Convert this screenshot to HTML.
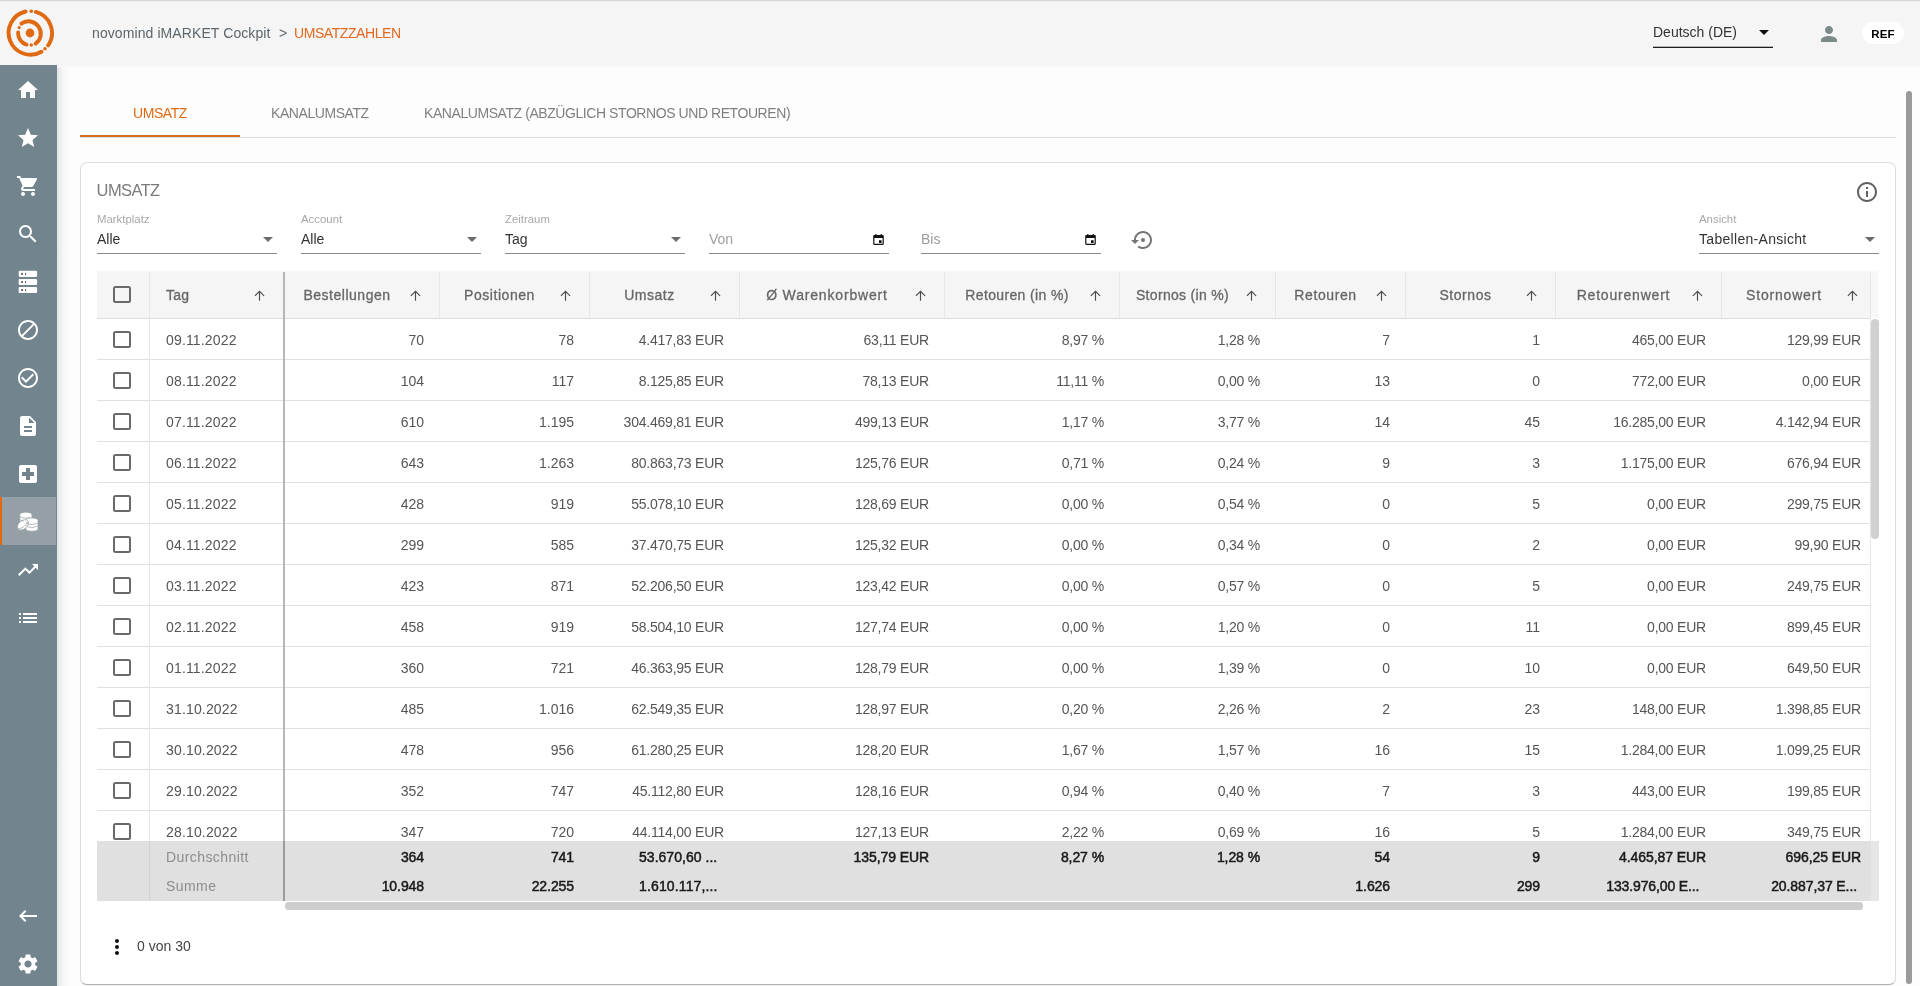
<!DOCTYPE html>
<html lang="de">
<head>
<meta charset="utf-8">
<title>novomind iMARKET Cockpit - UMSATZZAHLEN</title>
<style>
*{box-sizing:border-box;margin:0;padding:0}
html,body{width:1920px;height:986px;overflow:hidden}
body{font-family:"Liberation Sans",sans-serif;font-size:14px;color:#4a4a4a;background:#fdfdfd;position:relative}
#root{position:absolute;left:0;top:0;width:1920px;height:986px;overflow:hidden;transform:translateZ(0);will-change:transform}
.abs{position:absolute}
/* top bar */
#top{position:absolute;left:0;top:0;width:1920px;height:65px;background:#f5f5f5}
#topline{position:absolute;left:0;top:0;width:1920px;height:3px;background:linear-gradient(#d6d6d6,#d6d6d6 1px,#efefef 1px,#f5f5f5 3px)}
#crumb{position:absolute;left:92px;top:24px;height:18px;line-height:18px;font-size:14px;color:#5c666c;white-space:nowrap;letter-spacing:.09px}
#crumb b{position:absolute;left:187px;top:0;font-weight:normal;letter-spacing:0}
#crumb .o{position:absolute;left:202px;top:0;letter-spacing:-.42px}
#crumb .o{color:#e2691f}
#lang{position:absolute;left:1653px;top:23px;line-height:18px;font-size:14px;color:#333;white-space:nowrap}
#langline{position:absolute;left:1653px;top:46px;width:120px;height:2px;background:linear-gradient(#b5b5b5,#b5b5b5 45%,#1e1e1e 55%)}
.tri{position:absolute;width:0;height:0;border-left:5px solid transparent;border-right:5px solid transparent;border-top:5px solid #6c6c6c}
#ref{position:absolute;left:1862px;top:22px;width:42px;height:22px;border-radius:11px;background:#fff;color:#000;font-weight:bold;font-size:11.5px;line-height:24px;text-align:center;letter-spacing:.25px}
/* sidebar */
#side{position:absolute;left:0;top:65px;width:57px;height:921px;background:#72848e}
#sideshadow{position:absolute;left:57px;top:65px;width:16px;height:921px;background:linear-gradient(to right,rgba(40,70,80,.15),rgba(40,70,80,.07) 22%,rgba(40,70,80,.025) 50%,rgba(0,0,0,0))}
#topshadow{position:absolute;left:57px;top:65px;width:1863px;height:4px;background:linear-gradient(#f5f5f5,rgba(250,250,250,.5) 60%,rgba(253,253,253,0))}
#side svg{position:absolute;left:16px;width:24px;height:24px;fill:#fff}
#active{position:absolute;left:0;top:431.700px;width:56px;height:48.300px;background:#94a0a6;border-left:2.500px solid #df6a12}
/* main */
#tabs{position:absolute;left:57px;top:65px;width:1863px;height:73px;background:#fdfdfd}
#tabline{position:absolute;left:80px;top:137px;width:1816px;height:1px;background:#dcdcdc}
#tabind{position:absolute;left:80px;top:135px;width:160px;height:2px;background:#d8701e}
.tab{position:absolute;top:104px;line-height:18px;font-size:14px;color:#808080;white-space:nowrap;letter-spacing:-.43px}
#card{position:absolute;left:80px;top:162px;width:1816px;height:823px;background:#fff;border:1px solid #dcdcdc;border-bottom-color:#b2b2b2;border-radius:7px;box-shadow:0 1px 1px rgba(0,0,0,.06)}
#ctitle{position:absolute;left:96.6px;top:180px;font-size:16.5px;line-height:20px;color:#7a7a7a;letter-spacing:-.6px}
.flab{position:absolute;top:212px;font-size:11.4px;line-height:14px;color:#a8a8a8;white-space:nowrap}
.fval{position:absolute;top:230px;font-size:14px;line-height:18px;color:#333;white-space:nowrap}
.fval.ph{color:#9e9e9e}
.fline{position:absolute;top:253px;height:1px;width:180px;background:#8a8a8a}
/* table */
#tbl{position:absolute;left:97px;top:270px;width:1774px;height:631px;overflow:hidden}
#hext{position:absolute;left:1871px;top:271px;width:7px;height:47px;background:#f8f8f8}
#fext{position:absolute;left:1871px;top:841px;width:8px;height:60px;background:#e6e6e6}
#thead{position:absolute;left:0;top:0;width:1782px;height:48px;background:linear-gradient(#fcfcfc,#f5f5f5 3px)}
.hc{position:absolute;top:0;height:48px}
.hc span{position:absolute;top:16px;line-height:18px;font-size:14px;color:#666;-webkit-text-stroke:.3px #666;white-space:nowrap}
.hc .hm{width:200px;text-align:center}
.sa{position:absolute;right:18px;top:20px;width:11px;height:11px}
.tr{position:absolute;left:0;width:1782px;height:41px;border-bottom:1px solid #e0e0e0}
.tr span{position:absolute;top:12px;line-height:18px;font-size:14px;color:#555;white-space:nowrap}
.cb{position:absolute;width:18px;height:17px;border:2px solid #6a6a6a;border-radius:2.5px;background:#fff}
#hline{position:absolute;left:0;top:48px;width:1782px;height:1px;background:#dcdcdc}
.vs{position:absolute;top:2px;width:1px;height:629px;background:#e6e6e6}
#thick{position:absolute;left:186px;top:2px;width:2px;height:629px;background:linear-gradient(#b6b6b6,#b6b6b6 569px,#9c9c9c 569px)}
#tfoot{position:absolute;left:0;top:571px;width:1782px;height:60px;background:#e0e0e0}
.ftr{position:absolute;left:0;width:1782px;height:29px}
.ftr span{position:absolute;top:5px;line-height:18px;font-size:14px;white-space:nowrap}
.ftr .fl{color:#8c8c8c;letter-spacing:.42px}
.ftr .fr{color:#1a1a1a;-webkit-text-stroke:.5px #1a1a1a;letter-spacing:-.08px}
#vscroll{position:absolute;left:1871px;top:319px;width:8px;height:220px;border-radius:5px;background:#d0d0d0}
#hscroll{position:absolute;left:285px;top:902px;width:1578px;height:8px;border-radius:3.500px;background:#cdcdcd}
#pscroll{position:absolute;left:1906px;top:91px;width:6px;height:892.500px;border-radius:3px;background:#9a9a9a}
#count{position:absolute;left:137px;top:937px;line-height:18px;font-size:14px;color:#444}
</style>
</head>
<body>
<div id="root">
<div id="top"></div>
<div id="topline"></div>

<!-- logo -->
<svg class="abs" style="left:4.200px;top:7.300px" width="52" height="52" viewBox="0 0 52 52">
 <g fill="none" stroke="#df6a12" stroke-width="3.9" stroke-linecap="round">
  <path d="M31.9 4.9A21.9 21.9 0 0 1 44.2 38.3"/>
  <path d="M37.5 44.8A21.9 21.9 0 1 1 21.6 4.5"/>
  <path d="M17.4 16.6A12 12 0 1 1 31.6 36.7"/>
  <path d="M22.6 37.6A12 12 0 0 1 14.1 25.5"/>
 </g>
 <g fill="#df6a12">
  <circle cx="26" cy="26" r="4.4"/>
  <circle cx="27.3" cy="4.3" r="1.8"/>
  <circle cx="41" cy="41.8" r="1.8"/>
  <circle cx="15.2" cy="20.6" r="1.6"/>
  <circle cx="27.3" cy="38" r="1.7"/>
 </g>
</svg>

<div id="crumb">novomind iMARKET Cockpit<b>&gt;</b><span class="o">UMSATZZAHLEN</span></div>
<div id="lang">Deutsch (DE)</div>
<div id="langline"></div>
<div class="tri" style="left:1759px;top:30px;border-top-color:#111"></div>
<svg class="abs" style="left:1817px;top:22px" width="24" height="24" viewBox="0 0 24 24"><path fill="#7d8a8a" d="M12 12c2.21 0 4-1.79 4-4s-1.79-4-4-4-4 1.79-4 4 1.79 4 4 4zm0 2c-2.67 0-8 1.34-8 4v2h16v-2c0-2.66-5.33-4-8-4z"/></svg>
<div id="ref">REF</div>

<!-- main -->
<div id="tabs"></div>
<div id="tabline"></div>
<div id="tabind"></div>
<div class="tab" style="left:133px;color:#df6a12">UMSATZ</div>
<div class="tab" style="left:271px">KANALUMSATZ</div>
<div class="tab" style="left:424px">KANALUMSATZ (ABZÜGLICH STORNOS UND RETOUREN)</div>

<div id="card"></div>
<div id="ctitle">UMSATZ</div>
<svg class="abs" style="left:1855px;top:180px" width="24" height="24" viewBox="0 0 24 24"><path fill="#616161" d="M11 17h2v-6h-2v6zm1-15C6.48 2 2 6.48 2 12s4.48 10 10 10 10-4.48 10-10S17.52 2 12 2zm0 18c-4.42 0-8-3.58-8-8s3.58-8 8-8 8 3.58 8 8-3.58 8-8 8zM11 9h2V7h-2v2z"/></svg>

<div class="flab" style="left:97px">Marktplatz</div>
<div class="fval" style="left:97px">Alle</div>
<div class="fline" style="left:97px"></div>
<div class="tri" style="left:263px;top:237px"></div>

<div class="flab" style="left:301px">Account</div>
<div class="fval" style="left:301px">Alle</div>
<div class="fline" style="left:301px"></div>
<div class="tri" style="left:467px;top:237px"></div>

<div class="flab" style="left:505px">Zeitraum</div>
<div class="fval" style="left:505px">Tag</div>
<div class="fline" style="left:505px"></div>
<div class="tri" style="left:671px;top:237px"></div>

<div class="fval ph" style="left:709px">Von</div>
<div class="fline" style="left:709px"></div>
<svg class="abs cal" style="left:873px;top:234px" width="11" height="11" viewBox="0 0 11 11"><path fill="#111" d="M2.2 0h1.2v1h4.2V0h1.2v1H9.6c.7 0 1.2.5 1.2 1.2v7.6c0 .7-.5 1.2-1.2 1.2H1.4C.7 11 .2 10.500 .2 9.800V2.200C.2 1.500 .7 1 1.400 1h.8zM1.400 3.900v5.900h8.200V3.900zM6 6.300h2.600v2.600H6z"/></svg>

<div class="fval ph" style="left:921px">Bis</div>
<div class="fline" style="left:921px"></div>
<svg class="abs cal" style="left:1085px;top:234px" width="11" height="11" viewBox="0 0 11 11"><path fill="#111" d="M2.2 0h1.2v1h4.2V0h1.2v1H9.6c.7 0 1.2.5 1.2 1.2v7.6c0 .7-.5 1.2-1.2 1.2H1.4C.7 11 .2 10.500 .2 9.800V2.200C.2 1.500 .7 1 1.400 1h.8zM1.400 3.900v5.900h8.200V3.900zM6 6.300h2.600v2.600H6z"/></svg>

<svg class="abs" style="left:1131px;top:228px" width="24" height="24" viewBox="0 0 24 24"><path fill="#757575" d="M14 12c0-1.1-.9-2-2-2s-2 .9-2 2 .9 2 2 2 2-.9 2-2zm-2-9c-4.97 0-9 4.03-9 9H0l4 4 4-4H5c0-3.87 3.13-7 7-7s7 3.13 7 7-3.13 7-7 7c-1.51 0-2.91-.49-4.06-1.3l-1.42 1.44C8.040 20.300 9.940 21 12 21c4.970 0 9-4.030 9-9s-4.030-9-9-9z"/></svg>

<div class="flab" style="left:1699px">Ansicht</div>
<div class="fval" style="left:1699px;letter-spacing:.3px">Tabellen-Ansicht</div>
<div class="fline" style="left:1699px"></div>
<div class="tri" style="left:1865px;top:237px"></div>

<!-- table -->
<div id="tbl">
 <div id="thead"></div>
 <i class="cb" style="left:16px;top:16px;background:transparent"></i>
<div class="hc" style="left:52px;width:135px"><span style="left:17px;letter-spacing:0.24px">Tag</span><svg class="sa" style="right:19px" viewBox="0 0 11 11"><path d="M5.5 10.7V1.4M0.9 5.9L5.5 1.3l4.600 4.600" fill="none" stroke="#4d4d4d" stroke-width="1.15"/></svg></div>
<div class="hc" style="left:187px;width:155px"><span class="hm" style="left:-37.0px;letter-spacing:0.52px">Bestellungen</span><svg class="sa" viewBox="0 0 11 11"><path d="M5.5 10.7V1.4M0.9 5.9L5.5 1.3l4.600 4.600" fill="none" stroke="#4d4d4d" stroke-width="1.15"/></svg></div>
<div class="hc" style="left:342px;width:150px"><span class="hm" style="left:-39.5px;letter-spacing:0.54px">Positionen</span><svg class="sa" viewBox="0 0 11 11"><path d="M5.5 10.7V1.4M0.9 5.9L5.5 1.3l4.600 4.600" fill="none" stroke="#4d4d4d" stroke-width="1.15"/></svg></div>
<div class="hc" style="left:492px;width:150px"><span class="hm" style="left:-39.5px;letter-spacing:0.51px">Umsatz</span><svg class="sa" viewBox="0 0 11 11"><path d="M5.5 10.7V1.4M0.9 5.9L5.5 1.3l4.600 4.600" fill="none" stroke="#4d4d4d" stroke-width="1.15"/></svg></div>
<div class="hc" style="left:642px;width:205px"><span class="hm" style="left:-12.0px;letter-spacing:0.83px">Ø Warenkorbwert</span><svg class="sa" viewBox="0 0 11 11"><path d="M5.5 10.7V1.4M0.9 5.9L5.5 1.3l4.600 4.600" fill="none" stroke="#4d4d4d" stroke-width="1.15"/></svg></div>
<div class="hc" style="left:847px;width:175px"><span class="hm" style="left:-27.0px;letter-spacing:0.36px">Retouren (in %)</span><svg class="sa" viewBox="0 0 11 11"><path d="M5.5 10.7V1.4M0.9 5.9L5.5 1.3l4.600 4.600" fill="none" stroke="#4d4d4d" stroke-width="1.15"/></svg></div>
<div class="hc" style="left:1022px;width:156px"><span class="hm" style="left:-36.5px;letter-spacing:0.31px">Stornos (in %)</span><svg class="sa" viewBox="0 0 11 11"><path d="M5.5 10.7V1.4M0.9 5.9L5.5 1.3l4.600 4.600" fill="none" stroke="#4d4d4d" stroke-width="1.15"/></svg></div>
<div class="hc" style="left:1178px;width:130px"><span class="hm" style="left:-49.5px;letter-spacing:0.59px">Retouren</span><svg class="sa" viewBox="0 0 11 11"><path d="M5.5 10.7V1.4M0.9 5.9L5.5 1.3l4.600 4.600" fill="none" stroke="#4d4d4d" stroke-width="1.15"/></svg></div>
<div class="hc" style="left:1308px;width:150px"><span class="hm" style="left:-39.5px;letter-spacing:0.54px">Stornos</span><svg class="sa" viewBox="0 0 11 11"><path d="M5.5 10.7V1.4M0.9 5.9L5.5 1.3l4.600 4.600" fill="none" stroke="#4d4d4d" stroke-width="1.15"/></svg></div>
<div class="hc" style="left:1458px;width:166px"><span class="hm" style="left:-31.5px;letter-spacing:0.80px">Retourenwert</span><svg class="sa" viewBox="0 0 11 11"><path d="M5.5 10.7V1.4M0.9 5.9L5.5 1.3l4.600 4.600" fill="none" stroke="#4d4d4d" stroke-width="1.15"/></svg></div>
<div class="hc" style="left:1624px;width:155px"><span class="hm" style="left:-37.0px;letter-spacing:0.81px">Stornowert</span><svg class="sa" viewBox="0 0 11 11"><path d="M5.5 10.7V1.4M0.9 5.9L5.5 1.3l4.600 4.600" fill="none" stroke="#4d4d4d" stroke-width="1.15"/></svg></div>
 <div id="hline"></div>
<div class="tr" style="top:49px"><i class="cb" style="left:16px;top:12px"></i><span class="dl" style="left:69px;letter-spacing:.16px">09.11.2022</span><span class="dr" style="right:1455px">70</span><span class="dr" style="right:1305px">78</span><span class="dr" style="right:1155px;letter-spacing:-.22px">4.417,83 EUR</span><span class="dr" style="right:950px;letter-spacing:-.22px">63,11 EUR</span><span class="dr" style="right:775px;letter-spacing:-.22px">8,97 %</span><span class="dr" style="right:619px;letter-spacing:-.22px">1,28 %</span><span class="dr" style="right:489px">7</span><span class="dr" style="right:339px">1</span><span class="dr" style="right:173px;letter-spacing:-.22px">465,00 EUR</span><span class="dr" style="right:18px;letter-spacing:-.22px">129,99 EUR</span></div>
<div class="tr" style="top:90px"><i class="cb" style="left:16px;top:12px"></i><span class="dl" style="left:69px;letter-spacing:.16px">08.11.2022</span><span class="dr" style="right:1455px">104</span><span class="dr" style="right:1305px">117</span><span class="dr" style="right:1155px;letter-spacing:-.22px">8.125,85 EUR</span><span class="dr" style="right:950px;letter-spacing:-.22px">78,13 EUR</span><span class="dr" style="right:775px;letter-spacing:-.22px">11,11 %</span><span class="dr" style="right:619px;letter-spacing:-.22px">0,00 %</span><span class="dr" style="right:489px">13</span><span class="dr" style="right:339px">0</span><span class="dr" style="right:173px;letter-spacing:-.22px">772,00 EUR</span><span class="dr" style="right:18px;letter-spacing:-.22px">0,00 EUR</span></div>
<div class="tr" style="top:131px"><i class="cb" style="left:16px;top:12px"></i><span class="dl" style="left:69px;letter-spacing:.16px">07.11.2022</span><span class="dr" style="right:1455px">610</span><span class="dr" style="right:1305px">1.195</span><span class="dr" style="right:1155px;letter-spacing:-.22px">304.469,81 EUR</span><span class="dr" style="right:950px;letter-spacing:-.22px">499,13 EUR</span><span class="dr" style="right:775px;letter-spacing:-.22px">1,17 %</span><span class="dr" style="right:619px;letter-spacing:-.22px">3,77 %</span><span class="dr" style="right:489px">14</span><span class="dr" style="right:339px">45</span><span class="dr" style="right:173px;letter-spacing:-.22px">16.285,00 EUR</span><span class="dr" style="right:18px;letter-spacing:-.22px">4.142,94 EUR</span></div>
<div class="tr" style="top:172px"><i class="cb" style="left:16px;top:12px"></i><span class="dl" style="left:69px;letter-spacing:.16px">06.11.2022</span><span class="dr" style="right:1455px">643</span><span class="dr" style="right:1305px">1.263</span><span class="dr" style="right:1155px;letter-spacing:-.22px">80.863,73 EUR</span><span class="dr" style="right:950px;letter-spacing:-.22px">125,76 EUR</span><span class="dr" style="right:775px;letter-spacing:-.22px">0,71 %</span><span class="dr" style="right:619px;letter-spacing:-.22px">0,24 %</span><span class="dr" style="right:489px">9</span><span class="dr" style="right:339px">3</span><span class="dr" style="right:173px;letter-spacing:-.22px">1.175,00 EUR</span><span class="dr" style="right:18px;letter-spacing:-.22px">676,94 EUR</span></div>
<div class="tr" style="top:213px"><i class="cb" style="left:16px;top:12px"></i><span class="dl" style="left:69px;letter-spacing:.16px">05.11.2022</span><span class="dr" style="right:1455px">428</span><span class="dr" style="right:1305px">919</span><span class="dr" style="right:1155px;letter-spacing:-.22px">55.078,10 EUR</span><span class="dr" style="right:950px;letter-spacing:-.22px">128,69 EUR</span><span class="dr" style="right:775px;letter-spacing:-.22px">0,00 %</span><span class="dr" style="right:619px;letter-spacing:-.22px">0,54 %</span><span class="dr" style="right:489px">0</span><span class="dr" style="right:339px">5</span><span class="dr" style="right:173px;letter-spacing:-.22px">0,00 EUR</span><span class="dr" style="right:18px;letter-spacing:-.22px">299,75 EUR</span></div>
<div class="tr" style="top:254px"><i class="cb" style="left:16px;top:12px"></i><span class="dl" style="left:69px;letter-spacing:.16px">04.11.2022</span><span class="dr" style="right:1455px">299</span><span class="dr" style="right:1305px">585</span><span class="dr" style="right:1155px;letter-spacing:-.22px">37.470,75 EUR</span><span class="dr" style="right:950px;letter-spacing:-.22px">125,32 EUR</span><span class="dr" style="right:775px;letter-spacing:-.22px">0,00 %</span><span class="dr" style="right:619px;letter-spacing:-.22px">0,34 %</span><span class="dr" style="right:489px">0</span><span class="dr" style="right:339px">2</span><span class="dr" style="right:173px;letter-spacing:-.22px">0,00 EUR</span><span class="dr" style="right:18px;letter-spacing:-.22px">99,90 EUR</span></div>
<div class="tr" style="top:295px"><i class="cb" style="left:16px;top:12px"></i><span class="dl" style="left:69px;letter-spacing:.16px">03.11.2022</span><span class="dr" style="right:1455px">423</span><span class="dr" style="right:1305px">871</span><span class="dr" style="right:1155px;letter-spacing:-.22px">52.206,50 EUR</span><span class="dr" style="right:950px;letter-spacing:-.22px">123,42 EUR</span><span class="dr" style="right:775px;letter-spacing:-.22px">0,00 %</span><span class="dr" style="right:619px;letter-spacing:-.22px">0,57 %</span><span class="dr" style="right:489px">0</span><span class="dr" style="right:339px">5</span><span class="dr" style="right:173px;letter-spacing:-.22px">0,00 EUR</span><span class="dr" style="right:18px;letter-spacing:-.22px">249,75 EUR</span></div>
<div class="tr" style="top:336px"><i class="cb" style="left:16px;top:12px"></i><span class="dl" style="left:69px;letter-spacing:.16px">02.11.2022</span><span class="dr" style="right:1455px">458</span><span class="dr" style="right:1305px">919</span><span class="dr" style="right:1155px;letter-spacing:-.22px">58.504,10 EUR</span><span class="dr" style="right:950px;letter-spacing:-.22px">127,74 EUR</span><span class="dr" style="right:775px;letter-spacing:-.22px">0,00 %</span><span class="dr" style="right:619px;letter-spacing:-.22px">1,20 %</span><span class="dr" style="right:489px">0</span><span class="dr" style="right:339px">11</span><span class="dr" style="right:173px;letter-spacing:-.22px">0,00 EUR</span><span class="dr" style="right:18px;letter-spacing:-.22px">899,45 EUR</span></div>
<div class="tr" style="top:377px"><i class="cb" style="left:16px;top:12px"></i><span class="dl" style="left:69px;letter-spacing:.16px">01.11.2022</span><span class="dr" style="right:1455px">360</span><span class="dr" style="right:1305px">721</span><span class="dr" style="right:1155px;letter-spacing:-.22px">46.363,95 EUR</span><span class="dr" style="right:950px;letter-spacing:-.22px">128,79 EUR</span><span class="dr" style="right:775px;letter-spacing:-.22px">0,00 %</span><span class="dr" style="right:619px;letter-spacing:-.22px">1,39 %</span><span class="dr" style="right:489px">0</span><span class="dr" style="right:339px">10</span><span class="dr" style="right:173px;letter-spacing:-.22px">0,00 EUR</span><span class="dr" style="right:18px;letter-spacing:-.22px">649,50 EUR</span></div>
<div class="tr" style="top:418px"><i class="cb" style="left:16px;top:12px"></i><span class="dl" style="left:69px;letter-spacing:.16px">31.10.2022</span><span class="dr" style="right:1455px">485</span><span class="dr" style="right:1305px">1.016</span><span class="dr" style="right:1155px;letter-spacing:-.22px">62.549,35 EUR</span><span class="dr" style="right:950px;letter-spacing:-.22px">128,97 EUR</span><span class="dr" style="right:775px;letter-spacing:-.22px">0,20 %</span><span class="dr" style="right:619px;letter-spacing:-.22px">2,26 %</span><span class="dr" style="right:489px">2</span><span class="dr" style="right:339px">23</span><span class="dr" style="right:173px;letter-spacing:-.22px">148,00 EUR</span><span class="dr" style="right:18px;letter-spacing:-.22px">1.398,85 EUR</span></div>
<div class="tr" style="top:459px"><i class="cb" style="left:16px;top:12px"></i><span class="dl" style="left:69px;letter-spacing:.16px">30.10.2022</span><span class="dr" style="right:1455px">478</span><span class="dr" style="right:1305px">956</span><span class="dr" style="right:1155px;letter-spacing:-.22px">61.280,25 EUR</span><span class="dr" style="right:950px;letter-spacing:-.22px">128,20 EUR</span><span class="dr" style="right:775px;letter-spacing:-.22px">1,67 %</span><span class="dr" style="right:619px;letter-spacing:-.22px">1,57 %</span><span class="dr" style="right:489px">16</span><span class="dr" style="right:339px">15</span><span class="dr" style="right:173px;letter-spacing:-.22px">1.284,00 EUR</span><span class="dr" style="right:18px;letter-spacing:-.22px">1.099,25 EUR</span></div>
<div class="tr" style="top:500px"><i class="cb" style="left:16px;top:12px"></i><span class="dl" style="left:69px;letter-spacing:.16px">29.10.2022</span><span class="dr" style="right:1455px">352</span><span class="dr" style="right:1305px">747</span><span class="dr" style="right:1155px;letter-spacing:-.22px">45.112,80 EUR</span><span class="dr" style="right:950px;letter-spacing:-.22px">128,16 EUR</span><span class="dr" style="right:775px;letter-spacing:-.22px">0,94 %</span><span class="dr" style="right:619px;letter-spacing:-.22px">0,40 %</span><span class="dr" style="right:489px">7</span><span class="dr" style="right:339px">3</span><span class="dr" style="right:173px;letter-spacing:-.22px">443,00 EUR</span><span class="dr" style="right:18px;letter-spacing:-.22px">199,85 EUR</span></div>
<div class="tr" style="top:541px"><i class="cb" style="left:16px;top:12px"></i><span class="dl" style="left:69px;letter-spacing:.16px">28.10.2022</span><span class="dr" style="right:1455px">347</span><span class="dr" style="right:1305px">720</span><span class="dr" style="right:1155px;letter-spacing:-.22px">44.114,00 EUR</span><span class="dr" style="right:950px;letter-spacing:-.22px">127,13 EUR</span><span class="dr" style="right:775px;letter-spacing:-.22px">2,22 %</span><span class="dr" style="right:619px;letter-spacing:-.22px">0,69 %</span><span class="dr" style="right:489px">16</span><span class="dr" style="right:339px">5</span><span class="dr" style="right:173px;letter-spacing:-.22px">1.284,00 EUR</span><span class="dr" style="right:18px;letter-spacing:-.22px">349,75 EUR</span></div>
 <div id="tfoot"></div>
<div class="ftr" style="top:573px"><span class="fl" style="left:69px">Durchschnitt</span><span class="fr" style="right:1455px">364</span><span class="fr" style="right:1305px">741</span><span class="fr" style="left:542.0px;letter-spacing:0.03px">53.670,60 ...</span><span class="fr" style="right:950px">135,79 EUR</span><span class="fr" style="right:775px">8,27 %</span><span class="fr" style="right:619px">1,28 %</span><span class="fr" style="right:489px">54</span><span class="fr" style="right:339px">9</span><span class="fr" style="right:173px">4.465,87 EUR</span><span class="fr" style="right:18px">696,25 EUR</span></div>
<div class="ftr" style="top:602px"><span class="fl" style="left:69px">Summe</span><span class="fr" style="right:1455px">10.948</span><span class="fr" style="right:1305px">22.255</span><span class="fr" style="left:542.0px;letter-spacing:0.14px">1.610.117,...</span><span class="fr" style="right:489px">1.626</span><span class="fr" style="right:339px">299</span><span class="fr" style="left:1509.3px;letter-spacing:-0.13px">133.976,00 E...</span><span class="fr" style="left:1674.2px;letter-spacing:-0.10px">20.887,37 E...</span></div>
<div class="vs" style="left:52px;height:569px"></div>
<div class="vs" style="left:52px;top:571px;height:60px;background:#d2d2d2"></div>
<div class="vs" style="left:342px;height:46px"></div>
<div class="vs" style="left:492px;height:46px"></div>
<div class="vs" style="left:642px;height:46px"></div>
<div class="vs" style="left:847px;height:46px"></div>
<div class="vs" style="left:1022px;height:46px"></div>
<div class="vs" style="left:1178px;height:46px"></div>
<div class="vs" style="left:1308px;height:46px"></div>
<div class="vs" style="left:1458px;height:46px"></div>
<div class="vs" style="left:1624px;height:46px"></div>
<div class="vs" style="left:1773px;height:569px"></div>
 <div id="thick"></div>
</div>
<div id="hext"></div><div id="fext"></div>
<div id="vscroll"></div>
<div id="hscroll"></div>

<svg class="abs" style="left:105px;top:935px" width="24" height="24" viewBox="0 0 24 24"><path fill="#111" d="M12 8c1.1 0 2-.9 2-2s-.9-2-2-2-2 .9-2 2 .9 2 2 2zm0 2c-1.1 0-2 .9-2 2s.9 2 2 2 2-.9 2-2-.9-2-2-2zm0 6c-1.1 0-2 .9-2 2s.9 2 2 2 2-.9 2-2-.9-2-2-2z"/></svg>
<div id="count">0 von 30</div>

<div id="pscroll"></div>

<div id="sideshadow"></div><div id="topshadow"></div>
<!-- sidebar -->
<div id="side">
 <div id="active"></div>
 <svg style="top:13px" viewBox="0 0 24 24"><path d="M10 20v-6h4v6h5v-8h3L12 3 2 12h3v8z"/></svg>
 <svg style="top:61px" viewBox="0 0 24 24"><path d="M12 17.27L18.18 21l-1.64-7.03L22 9.24l-7.19-.61L12 2 9.19 8.63 2 9.24l5.46 4.73L5.82 21z"/></svg>
 <svg style="top:109px" viewBox="0 0 24 24"><path d="M7 18c-1.1 0-1.99.9-1.99 2S5.9 22 7 22s2-.9 2-2-.9-2-2-2zM1 2v2h2l3.6 7.59-1.35 2.45c-.16.28-.25.61-.25.96 0 1.1.9 2 2 2h12v-2H7.42c-.14 0-.25-.11-.25-.25l.03-.12.9-1.63h7.45c.75 0 1.41-.41 1.75-1.03l3.58-6.49c.08-.14.12-.31.12-.48 0-.55-.45-1-1-1H5.21l-.94-2H1zm16 16c-1.1 0-1.99.9-1.99 2s.89 2 1.99 2 2-.9 2-2-.9-2-2-2z"/></svg>
 <svg style="top:157px" viewBox="0 0 24 24"><path d="M15.5 14h-.79l-.28-.27C15.41 12.59 16 11.11 16 9.5 16 5.91 13.09 3 9.5 3S3 5.91 3 9.5 5.91 16 9.5 16c1.61 0 3.09-.59 4.23-1.57l.27.28v.79l5 4.99L20.49 19l-4.99-5zm-6 0C7.01 14 5 11.99 5 9.500S7.010 5 9.500 5 14 7.010 14 9.500 11.990 14 9.500 14z"/></svg>
 <svg style="top:205px" viewBox="0 0 24 24"><g><rect x="2.7" y="0.7" width="18.4" height="6.2" rx="1.1"/><rect x="2.7" y="9" width="18.4" height="6.1" rx="1.1"/><rect x="2.7" y="17" width="18.4" height="6.1" rx="1.1"/></g><g fill="#5b666d"><rect x="5.1" y="2.9" width="1.9" height="1.9"/><rect x="9" y="2.800" width="1.1" height="2.100"/><rect x="5.1" y="11.1" width="1.9" height="1.9"/><rect x="9" y="11" width="1.1" height="2.100"/><rect x="5.1" y="19.1" width="1.900" height="1.900"/><rect x="9" y="19" width="1.100" height="2.100"/></g></svg>
 <svg style="top:253px" viewBox="0 0 24 24"><path d="M12 2C6.48 2 2 6.48 2 12s4.48 10 10 10 10-4.48 10-10S17.52 2 12 2zM4 12c0-4.42 3.58-8 8-8 1.85 0 3.55.63 4.9 1.69L5.69 16.9C4.63 15.55 4 13.85 4 12zm8 8c-1.85 0-3.55-.63-4.9-1.69L18.31 7.1C19.37 8.45 20 10.15 20 12c0 4.42-3.58 8-8 8z"/></svg>
 <svg style="top:301px" viewBox="0 0 24 24"><path d="M16.59 7.58L10 14.17l-3.59-3.58L5 12l5 5 8-8zM12 2C6.48 2 2 6.48 2 12s4.48 10 10 10 10-4.48 10-10S17.52 2 12 2zm0 18c-4.42 0-8-3.58-8-8s3.58-8 8-8 8 3.58 8 8-3.58 8-8 8z"/></svg>
 <svg style="top:349px" viewBox="0 0 24 24"><path d="M14 2H6c-1.1 0-1.99.9-1.99 2L4 20c0 1.1.89 2 1.99 2H18c1.1 0 2-.9 2-2V8l-6-6zm2 16H8v-2h8v2zm0-4H8v-2h8v2zm-3-5V3.5L18.5 9H13z"/></svg>
 <svg style="top:397px" viewBox="0 0 24 24"><path d="M19 3H5c-1.1 0-1.99.9-1.99 2L3 19c0 1.1.9 2 2 2h14c1.1 0 2-.9 2-2V5c0-1.1-.9-2-2-2zm-1 11h-4v4h-4v-4H6v-4h4V6h4v4h4v4z"/></svg>
 <svg style="top:445px" viewBox="0 0 24 24"><g stroke="#94a0a6" stroke-width=".7"><path d="M3.800 4.600C3.800 3.300 6.500 2.300 9.850 2.300s6.050 1 6.050 2.300v8.400c0 1.300-2.700 2.300-6.050 2.300S3.800 14.300 3.800 13z"/><path d="M9.800 10.300c0-1.300 2.700-2.300 6.100-2.300s6.100 1 6.100 2.300v8.600c0 1.300-2.700 2.300-6.100 2.300s-6.100-1-6.100-2.300z"/><ellipse cx="7" cy="14.900" rx="6.300" ry="4.200" transform="rotate(-40 7 14.900)"/></g><g fill="none" stroke="#94a0a6" stroke-width=".75"><path d="M4 6.400c.9 1 3.100 1.700 5.850 1.700 1.800 0 3.400-.3 4.500-.8"/><path d="M4 9.500c.6.700 1.900 1.200 3.600 1.500"/><path d="M10 12.700c.9 1 3.100 1.700 5.900 1.700s5-.7 5.900-1.700"/><path d="M10.300 15.700c.9 1 3 1.600 5.600 1.600s4.900-.6 5.900-1.700"/><path d="M2.600 18.600c2.600.500 7-2.700 9.100-6.800"/></g></svg>
 <svg style="top:493px" viewBox="0 0 24 24"><path d="M16 6l2.29 2.29-4.88 4.88-4-4L2 16.59 3.41 18l6-6 4 4 6.3-6.29L22 12V6z"/></svg>
 <svg style="top:541px" viewBox="0 0 24 24"><path d="M3 13h2v-2H3v2zm0 4h2v-2H3v2zm0-8h2V7H3v2zm4 4h14v-2H7v2zm0 4h14v-2H7v2zM7 7v2h14V7H7z"/></svg>
 <svg style="top:839px" viewBox="0 0 24 24"><path d="M21 11H6.83l3.58-3.590L9 6l-6 6 6 6 1.410-1.410L6.830 13H21z"/></svg>
 <svg style="top:887px" viewBox="0 0 24 24"><path d="M19.14,12.94c0.04-0.3,0.06-0.61,0.06-0.94c0-0.32-0.02-0.64-0.07-0.94l2.03-1.58c0.18-0.14,0.23-0.41,0.12-0.61 l-1.92-3.32c-0.12-0.22-0.37-0.29-0.59-0.22l-2.39,0.96c-0.5-0.38-1.03-0.7-1.62-0.94L14.4,2.81c-0.04-0.24-0.24-0.41-0.48-0.41 h-3.84c-0.24,0-0.43,0.17-0.47,0.41L9.25,5.35C8.66,5.59,8.12,5.92,7.63,6.29L5.24,5.33c-0.22-0.08-0.47,0-0.59,0.22L2.74,8.87 C2.62,9.08,2.66,9.34,2.86,9.48l2.03,1.58C4.84,11.36,4.8,11.69,4.8,12s0.02,0.64,0.07,0.94l-2.03,1.58 c-0.18,0.14-0.23,0.41-0.12,0.61l1.92,3.32c0.12,0.22,0.37,0.29,0.59,0.22l2.39-0.96c0.5,0.38,1.03,0.7,1.62,0.94l0.36,2.54 c0.05,0.24,0.24,0.41,0.48,0.41h3.84c0.24,0,0.44-0.17,0.47-0.41l0.36-2.54c0.59-0.24,1.13-0.56,1.62-0.94l2.39,0.96 c0.22,0.08,0.47,0,0.59-0.22l1.92-3.32c0.12-0.22,0.07-0.47-0.12-0.61L19.14,12.94z M12,15.6c-1.98,0-3.6-1.62-3.6-3.6 s1.62-3.6,3.6-3.6s3.6,1.62,3.6,3.6S13.98,15.6,12,15.6z"/></svg>
</div>
</div>
</body>
</html>
